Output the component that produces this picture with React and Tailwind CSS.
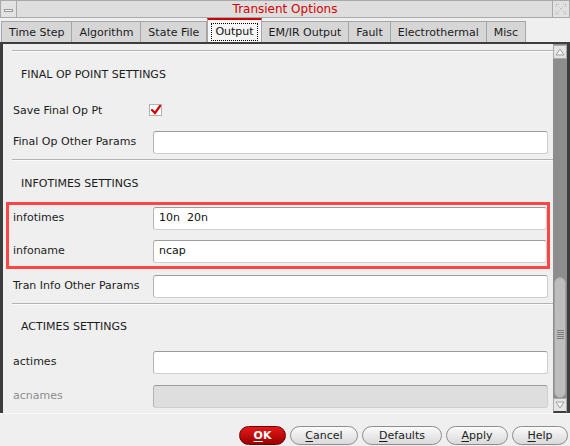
import React from 'react';

const tabs = ['Time Step', 'Algorithm', 'State File', 'Output', 'EM/IR Output', 'Fault', 'Electrothermal', 'Misc'];

function Field({ label, value, disabled }) {
    return (
        <div className="flex items-center h-[34px]">
            <div className={`w-[150px] pl-[10px] ${disabled ? 'text-[#8c8c8c]' : 'text-[#1c1c1c]'}`}>{label}</div>
            <div
                className={`flex-1 mr-[5px] h-[23px] rounded-[3px] border border-[#cfcfcf] border-t-[#9c9c9c] border-l-[#b4b4b4] flex items-center pl-[5px] text-[#111] ${disabled ? 'bg-[#dedede]' : 'bg-white'}`}
            >
                {value}
            </div>
        </div>
    );
}

function Separator() {
    return (
        <div className="ml-[9px]">
            <div className="h-px bg-[#b3b3b3]" />
            <div className="h-px bg-[#fbfbfb]" />
        </div>
    );
}

function Header({ children, className }) {
    return <div className={`flex items-center pl-[18px] text-[#1c1c1c] ${className}`}>{children}</div>;
}

function Btn({ label, rest, w }) {
    return (
        <button className={`${w} h-[19px] rounded-full border border-[#8e8e8e] bg-linear-to-b from-[#fbfbfb] to-[#d9d9d9] text-[#1c1c1c] flex items-center justify-center leading-none`}>
            <span className="underline underline-offset-2">{label}</span>
            {rest}
        </button>
    );
}

export default function App() {
    return (
        <div className="w-[570px] h-[446px] bg-[#efefef] text-[11px] flex flex-col overflow-hidden" style={{ fontFamily: '"DejaVu Sans", sans-serif' }}>
            {/* title bar */}
            <div className="h-[18px] flex">
                <div className="w-[17px] h-[18px] bg-[#e2e2e2] border border-[#a9a9a9] flex items-center justify-center">
                    <div className="w-[9px] h-[3px] bg-[#f4f4f4] border border-[#9a9a9a] mt-[3px]" />
                </div>
                <div className="flex-1 bg-[#dedede] border-y border-[#a9a9a9] flex items-center justify-center text-[12px] text-[#d40000]">
                    <span className="ml-[1px]">Transient Options</span>
                </div>
                <div className="w-[18px] h-[18px] bg-[#e2e2e2] border border-[#a9a9a9] flex items-center justify-center">
                    <svg width="12" height="12" viewBox="0 0 12 12" fill="none" stroke="#b9b9b9" strokeWidth="1" strokeDasharray="1 1">
                        <path d="M1 1 L11 11 M11 1 L1 11 M1 1 H4 M1 1 V4 M11 11 H8 M11 11 V8 M11 1 H8 M11 1 V4 M1 11 H4 M1 11 V8" />
                    </svg>
                </div>
            </div>

            {/* tabs */}
            <div className="h-[24px] flex items-end pl-[1px]">
                {tabs.map((t) =>
                    t === 'Output' ? (
                        <div key={t} className="h-[24px] px-[3px] pt-[1px] bg-[#f6f6f6] border-t-2 border-[#cc0000] border-x border-x-[#a6a6a6] flex items-center text-[#111]">
                            <span className="px-[3px] py-[1px] border border-dotted border-black leading-[14px]">{t}</span>
                        </div>
                    ) : (
                        <div key={t} className="h-[21px] px-[7px] pt-[2px] bg-[#d6d6d6] border border-b-0 border-[#a6a6a6] flex items-center text-[#1c1c1c] -ml-px first:ml-0">
                            {t}
                        </div>
                    )
                )}
            </div>

            {/* frame */}
            <div className="h-[371px] flex border-l-[3px] border-t-2 border-r-[3px] border-[#3d3d3d]">
                <div className="flex-1 flex flex-col pt-[6px] overflow-hidden">
                    <Separator />
                    <Header className="h-[44px] pt-[2px]">FINAL OP POINT SETTINGS</Header>
                    <div className="flex items-center h-[29px]">
                        <div className="w-[146px] pl-[10px] pt-[1px] text-[#1c1c1c]">Save Final Op Pt</div>
                        <svg width="14" height="13" viewBox="0 0 14 13">
                            <rect x="0.5" y="0.5" width="12" height="11" fill="#fff" stroke="#b0b0b0" />
                            <path d="M3 6 L6 9 L11 2" fill="none" stroke="#d40000" strokeWidth="2.2" strokeLinecap="round" />
                        </svg>
                    </div>
                    <div className="h-[34px] flex flex-col justify-center">
                        <Field label="Final Op Other Params" />
                    </div>
                    <Separator />
                    <Header className="h-[41px] pt-[5px]">INFOTIMES SETTINGS</Header>
                    <div className="ml-[3px] mr-[3px] h-[67px] border-[3px] border-[#ff4646] flex flex-col pt-[2px] gap-[10px]">
                        <div className="flex items-center h-[23px]">
                            <div className="w-[144px] pl-[4px] text-[#1c1c1c]">infotimes</div>
                            <div className="flex-1 h-[23px] rounded-[3px] border border-[#cfcfcf] border-t-[#9c9c9c] border-l-[#b4b4b4] bg-white flex items-center pl-[5px] text-[#111]">10n&nbsp;&nbsp;20n</div>
                        </div>
                        <div className="flex items-center h-[23px]">
                            <div className="w-[144px] pl-[4px] text-[#1c1c1c]">infoname</div>
                            <div className="flex-1 h-[23px] rounded-[3px] border border-[#cfcfcf] border-t-[#9c9c9c] border-l-[#b4b4b4] bg-white flex items-center pl-[5px] text-[#111]">ncap</div>
                        </div>
                    </div>
                    <Field label="Tran Info Other Params" />
                    <Separator />
                    <Header className="h-[40px] pt-[5px]">ACTIMES SETTINGS</Header>
                    <Field label="actimes" />
                    <Field label="acnames" disabled />
                </div>

                {/* scrollbar */}
                <div className="w-[14px] flex flex-col bg-[#8d8d8d] pt-px">
                    <div className="h-[14px] bg-[#e4e4e4] border border-[#a8a8a8] flex items-center justify-center">
                        <svg width="10" height="8" viewBox="0 0 10 8"><path d="M1 7 L5 1 L9 7 Z" fill="#f4f4f4" stroke="#a0a0a0" /></svg>
                    </div>
                    <div className="flex-1 flex flex-col justify-end">
                        <div className="h-[121px] mx-px rounded-t-[6px] rounded-b-[6px] bg-[#bdbdbd] border border-[#a2a2a2] flex items-center justify-center pb-[6px]">
                            <div className="flex flex-col gap-[1px]">
                                <div className="w-[7px] h-px bg-[#7d7d7d]" />
                                <div className="w-[7px] h-px bg-[#7d7d7d]" />
                                <div className="w-[7px] h-px bg-[#7d7d7d]" />
                                <div className="w-[7px] h-px bg-[#7d7d7d]" />
                                <div className="w-[7px] h-px bg-[#7d7d7d]" />
                            </div>
                        </div>
                    </div>
                    <div className="h-[15px] bg-[#e4e4e4] border border-[#a8a8a8] border-b-2 border-b-[#3d3d3d] flex items-center justify-center">
                        <svg width="10" height="8" viewBox="0 0 10 8"><path d="M1 1 L5 7 L9 1 Z" fill="#f4f4f4" stroke="#a0a0a0" /></svg>
                    </div>
                </div>
            </div>
            <div className="h-px bg-[#fafafa]" />

            {/* buttons */}
            <div className="flex-1 flex justify-end items-start pt-[12px] pr-[2px] gap-[4px]">
                <button className="w-[47px] h-[19px] rounded-full border border-[#6e0000] bg-linear-to-b from-[#e41a1a] to-[#9c0000] text-white font-bold flex items-center justify-center leading-none">
                    <span className="underline underline-offset-2">O</span>K
                </button>
                <Btn w="w-[68px]" label="C" rest="ancel" />
                <Btn w="w-[80px]" label="D" rest="efaults" />
                <Btn w="w-[62px]" label="A" rest="pply" />
                <Btn w="w-[56px]" label="H" rest="elp" />
            </div>
        </div>
    );
}
